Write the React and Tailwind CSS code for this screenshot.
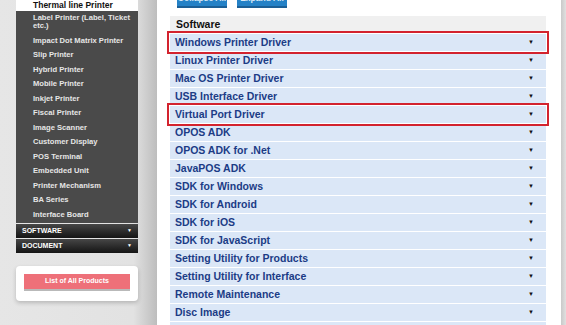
import React from 'react';

const categories = [
  'Label Printer (Label, Ticket etc.)',
  'Impact Dot Matrix Printer',
  'Slip Printer',
  'Hybrid Printer',
  'Mobile Printer',
  'Inkjet Printer',
  'Fiscal Printer',
  'Image Scanner',
  'Customer Display',
  'POS Terminal',
  'Embedded Unit',
  'Printer Mechanism',
  'BA Series',
  'Interface Board',
];

const downloads = [
  { name: 'Windows Printer Driver', marked: true },
  { name: 'Linux Printer Driver' },
  { name: 'Mac OS Printer Driver' },
  { name: 'USB Interface Driver' },
  { name: 'Virtual Port Driver', marked: true },
  { name: 'OPOS ADK' },
  { name: 'OPOS ADK for .Net' },
  { name: 'JavaPOS ADK' },
  { name: 'SDK for Windows' },
  { name: 'SDK for Android' },
  { name: 'SDK for iOS' },
  { name: 'SDK for JavaScript' },
  { name: 'Setting Utility for Products' },
  { name: 'Setting Utility for Interface' },
  { name: 'Remote Maintenance' },
  { name: 'Disc Image' },
  { name: 'Manual' },
];

function SideBar({ label }) {
  return (
    <div className="h-[14px] mt-px flex items-center justify-between pl-[6px] pr-[6px] bg-gradient-to-b from-[#474747] to-[#151515] text-white text-[7px] font-bold uppercase">
      <span>{label}</span>
      <span className="text-[5px]">▼</span>
    </div>
  );
}

function Sidebar() {
  return (
    <div className="w-[157px] shrink-0 bg-gradient-to-r from-[#e6e6e6] via-[#e2e2e2] via-85% to-[#bdbdbd] pl-[16px]">
      <div className="w-[122px]">
        <div className="h-[11px] bg-white flex items-center pl-[17px] text-[8.5px] font-bold text-[#111]">
          Thermal line Printer
        </div>
        <ul className="bg-[#4a4a4a] pb-px">
          {categories.map((c) => (
            <li
              key={c}
              className="pl-[17px] pr-[6px] py-[3.25px] text-[7.6px] leading-[8px] font-bold text-[#e6e6e6]"
            >
              {c}
            </li>
          ))}
        </ul>
        <SideBar label="Software" />
        <SideBar label="Document" />

        <div className="mt-[13px] bg-white rounded-sm shadow-[0_2px_4px_rgba(0,0,0,0.2)] px-[8px] pt-[8px] pb-[10px]">
          <div className="h-[15px] bg-[#ee7079] border-b-2 border-[#b9b9b9] box-content flex items-center justify-center text-white text-[7px] font-bold">
            List of All Products
          </div>
        </div>
      </div>
    </div>
  );
}

function Row({ name, marked }) {
  return (
    <div
      className={
        'relative h-[17px] mt-px flex items-center justify-between pl-[5px] pr-[12px] bg-[#dbe7f7] text-[10.5px] font-bold text-[#1c3c86]' +
        (marked ? ' z-10 outline-[2.5px] outline-offset-[1px] outline-[#d3232e]' : '')
      }
    >
      <span>{name}</span>
      <span className="text-[6px] text-[#111]">▼</span>
    </div>
  );
}

function TopButton({ children }) {
  return (
    <button className="w-[50px] h-[17px] flex items-center justify-center whitespace-nowrap bg-[#2481c6] border-b-2 border-[#1b5f96] text-[#dbeaf7] text-[8.5px] font-bold">
      {children}
    </button>
  );
}

export default function App() {
  return (
    <div
      className="w-[566px] h-[325px] overflow-hidden flex bg-[#e6e6e6]"
      style={{ fontFamily: '"Liberation Sans", Arial, sans-serif' }}
    >
      <Sidebar />
      <main className="w-[404px] shrink-0 bg-white">
        <div className="flex gap-[10px] pl-[20px] -mt-[9px]">
          <TopButton>Collapse All</TopButton>
          <TopButton>Expand All</TopButton>
        </div>
        <div className="ml-[13px] mr-[15px] mt-[8px]">
          <div className="h-[17px] flex items-center pl-[6px] bg-[#f0f0f0] text-[10.5px] font-bold text-[#111]">
            Software
          </div>
          {downloads.map((d) => (
            <Row key={d.name} {...d} />
          ))}
        </div>
      </main>
      <div className="flex-1 bg-gradient-to-r from-[#c9c9c9] to-[#e0e0e0]" />
    </div>
  );
}
